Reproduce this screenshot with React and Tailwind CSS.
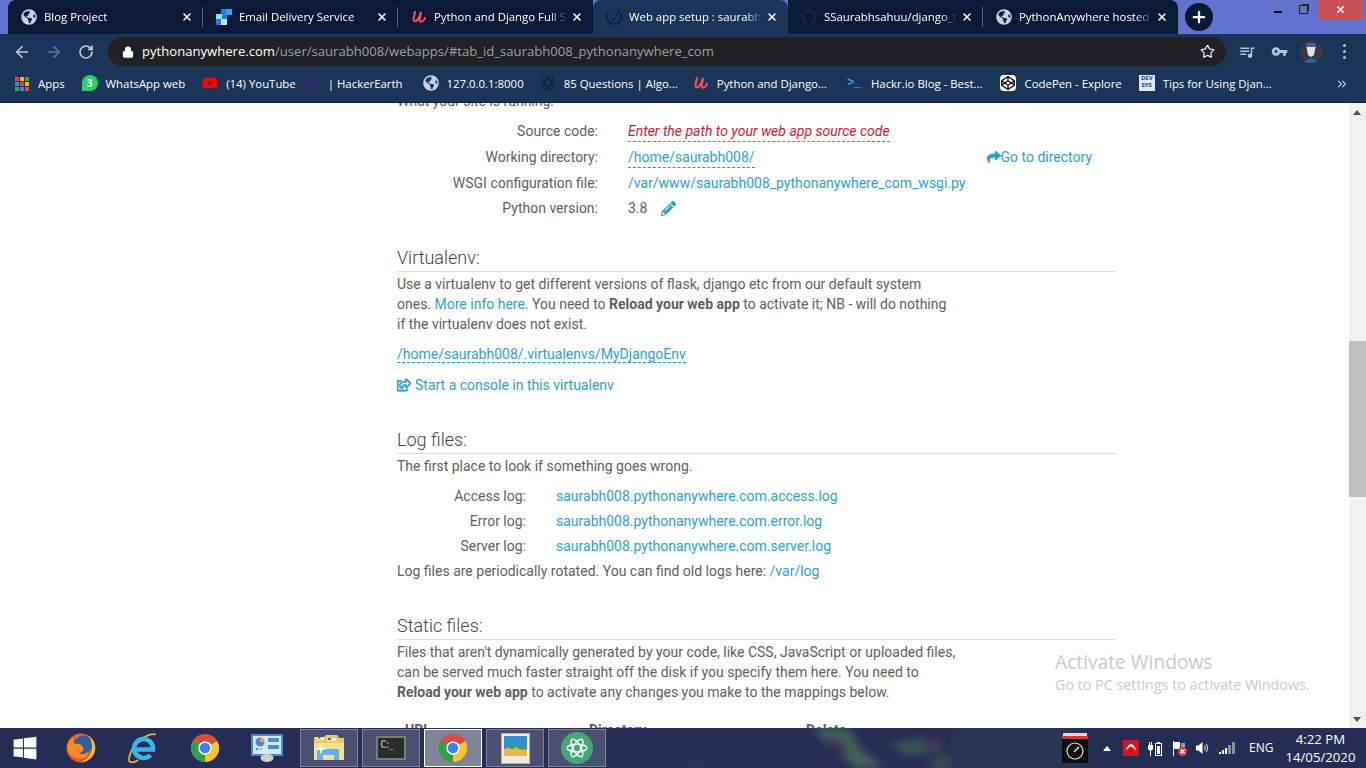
import React from 'react';
import { ArrowLeft, ArrowRight, RotateCw, Lock, Star, X, Plus, ChevronsRight } from 'lucide-react';
import { MdQueueMusic, MdVpnKey } from 'react-icons/md';
import { FaGlobeAmericas, FaGithub, FaPencilAlt, FaShare, FaRegShareSquare, FaWindows, FaYoutube, FaCodepen } from 'react-icons/fa';

const Udemy = ({ className }) => (
  <svg viewBox="0 0 16 16" className={className} fill="none" stroke="#ec5252" strokeWidth="2.2" strokeLinecap="round">
    <path d="M4 3 L2.5 10 Q2.5 13 5 12 Q8 10 10 3 L8.5 11 Q8.5 13 11 12.5 Q13 12 14 9" />
  </svg>
);

const Sendgrid = () => (
  <svg viewBox="0 0 16 16" className="w-4 h-4 shrink-0">
    <rect x="5" y="0" width="6" height="6" fill="#1a82e2" />
    <rect x="10" y="0" width="6" height="6" fill="#3aa0f0" />
    <rect x="5" y="5" width="6" height="6" fill="#1a82e2" />
    <rect x="0" y="5" width="6" height="6" fill="#99e1f4" />
    <rect x="0" y="10" width="6" height="6" fill="#1a82e2" />
    <rect x="5" y="10" width="6" height="6" fill="#bfe9f7" />
  </svg>
);

const Chrome = ({ size = 'w-[30px] h-[30px]' }) => (
  <svg viewBox="0 0 32 32" className={size}>
    <circle cx="16" cy="16" r="15" fill="#dd4b3e" />
    <path d="M16 16 L29 8.5 A15 15 0 0 1 16 31 Z" fill="#f6c42f" />
    <path d="M16 16 L16 31 A15 15 0 0 1 3 8.5 Z" fill="#2ba24c" />
    <circle cx="16" cy="16" r="7.2" fill="#fff" />
    <circle cx="16" cy="16" r="5.6" fill="#3f82ee" />
  </svg>
);

const Firefox = () => (
  <svg viewBox="0 0 30 30" className="w-[30px] h-[30px]">
    <circle cx="15" cy="15" r="14.5" fill="#e2571e" />
    <circle cx="17" cy="12" r="9.5" fill="#2f5f9e" />
    <path d="M22 2 Q30 8 29 17 Q27 27 15 29.5 Q26 24 26 14 Q26 7 22 2 Z" fill="#f7c23c" />
    <path d="M1 13 Q3 6 9 3 Q6 8 9 11 Q14 10 17 14 Q19 19 13 20 Q18 23 23 18 Q21 27 12 26 Q2 24 1 13 Z" fill="#f58a1f" />
    <path d="M8 2.5 Q12 0.5 17 1 Q12 3 11 6 Q9 5 8 2.5 Z" fill="#ee6a1f" />
  </svg>
);

const IE = () => (
  <svg viewBox="0 0 30 30" className="w-[30px] h-[30px]" fill="none">
    <path d="M28 1.5 C22 -0.5 10 6 4 17 C1 23 0 27 2 29 C4 30 7 29 10 27" stroke="#e6b428" strokeWidth="1.8" />
    <path d="M7.5 16.5 H25 A9.5 9.5 0 1 0 22.5 22" stroke="#35b6ec" strokeWidth="4.6" />
  </svg>
);

const ControlPanel = () => (
  <svg viewBox="0 0 32 28" className="w-[32px] h-[28px]">
    <rect x="0" y="0" width="32" height="22" fill="#3d8fd0" />
    <rect x="2" y="2" width="28" height="18" fill="#d5e8f7" />
    <circle cx="9" cy="8" r="4.5" fill="#3d8fd0" />
    <path d="M9 8 V3.5 A4.5 4.5 0 0 1 13.5 8 Z" fill="#f0a030" />
    <rect x="17" y="4" width="11" height="4" fill="#3d8fd0" />
    <rect x="17" y="11" width="11" height="4" fill="#3d8fd0" />
    <circle cx="6" cy="15" r="1.3" fill="#3d8fd0" />
    <circle cx="10" cy="15" r="1.3" fill="#f0a030" />
    <ellipse cx="16" cy="24" rx="6.5" ry="4" fill="#d0d0d0" />
  </svg>
);

const Explorer = () => (
  <svg viewBox="0 0 32 28" className="w-[32px] h-[28px]">
    <path d="M1 3 H11 L13 1 H24 L26 4 H31 V26 H1 Z" fill="#e9cc6a" />
    <rect x="4" y="3" width="7" height="3" fill="#f7f3df" />
    <rect x="5" y="3" width="2.5" height="2" fill="#3fa34d" />
    <rect x="14" y="4" width="9" height="3" fill="#f7f3df" />
    <rect x="15" y="4" width="3" height="2" fill="#c83b2e" />
    <rect x="1" y="9" width="30" height="17" fill="#f5e08e" />
    <path d="M4 26 V15 H26 V26 H21 V21 H10 V26 Z" fill="#63b4e0" />
    <path d="M8 9 L9 14 L14 15 L9 16 L8 21 L7 16 L2 15 L7 14 Z" fill="#ffffff" />
  </svg>
);

const Photos = () => (
  <svg viewBox="0 0 29 31" className="w-[29px] h-[31px]">
    <rect width="29" height="31" fill="#bfae8f" />
    <rect x="1" y="1" width="27" height="29" fill="#f3ebd9" />
    <rect x="3" y="3" width="23" height="20" fill="#2f8fd6" />
    <path d="M3 16 Q14 12 26 17 V23 H3 Z" fill="#e9b84c" />
    <path d="M8 16 L11 9 L14 16 Z M17 16 L20 10 L23 17 Z" fill="#4a9c5a" />
  </svg>
);

const tabs = [
  { title: 'Blog Project', icon: <FaGlobeAmericas className="w-4 h-4 text-[#c5d0e6] shrink-0" /> },
  { title: 'Email Delivery Service', icon: <Sendgrid /> },
  { title: 'Python and Django Full Stack', icon: <Udemy className="w-4 h-4 shrink-0" /> },
  {
    title: 'Web app setup : saurabh008',
    active: true,
    icon: (
      <svg viewBox="0 0 16 16" className="w-4 h-4 shrink-0" fill="none" stroke="#0b1a35" strokeWidth="1.4">
        <path d="M11 1.5 A7 7 0 0 1 8 15 A7 7 0 0 1 3 3" />
        <path d="M6 6 L6.5 7 M10 6 L10.5 7 M6 11 Q8 11 9 9" />
      </svg>
    ),
  },
  { title: 'SSaurabhsahuu/django_tutorial', icon: <FaGithub className="w-4 h-4 text-[#16263f] shrink-0" /> },
  { title: 'PythonAnywhere hosted', icon: <FaGlobeAmericas className="w-4 h-4 text-[#c5d0e6] shrink-0" /> },
];

const bookmarks = [
  { name: 'WhatsApp web', w: 'ml-[17px]', icon: <span className="w-[16px] h-[16px] rounded-full rounded-bl-none bg-[#25d366] text-white text-[10px] font-bold flex items-center justify-center">3</span> },
  { name: '(14) YouTube', w: 'ml-[17px]', icon: <FaYoutube className="w-4 h-4 text-[#f00]" /> },
  { name: '| HackerEarth', w: 'ml-[8px]', icon: <span className="w-4 h-4 bg-[#21305c]" /> },
  { name: '127.0.0.1:8000', w: 'ml-[20px]', icon: <FaGlobeAmericas className="w-4 h-4 text-[#c5d0e6]" /> },
  {
    name: '85 Questions | Algo...',
    w: 'ml-[16px]',
    icon: (
      <svg viewBox="0 0 16 16" className="w-4 h-4" fill="none" stroke="#10223f" strokeWidth="1">
        <ellipse cx="8" cy="8" rx="7.5" ry="3" />
        <ellipse cx="8" cy="8" rx="7.5" ry="3" transform="rotate(60 8 8)" />
        <ellipse cx="8" cy="8" rx="7.5" ry="3" transform="rotate(120 8 8)" />
      </svg>
    ),
  },
  { name: 'Python and Django...', w: 'ml-[15px]', icon: <Udemy className="w-4 h-4" /> },
  { name: 'Hackr.io Blog - Best...', w: 'ml-[20px]', icon: <span className="w-4 h-4 text-[#3f9be0] text-[12px] font-bold leading-4 font-['Liberation_Mono',monospace]">{'>_'}</span> },
  { name: 'CodePen - Explore', w: 'ml-[18px]', icon: <span className="w-4 h-4 bg-white rounded-sm flex items-center justify-center"><FaCodepen className="w-[14px] h-[14px] text-black" /></span> },
  {
    name: 'Tips for Using Djan...',
    w: 'ml-[17px]',
    icon: <span className="w-4 h-4 bg-[#dfe6f2] text-[#24406e] text-[6px] font-bold leading-[7px] text-center overflow-hidden">DEV<br />SYS</span>,
  },
];

const Tab = ({ tab, last, first, sep }) => (
  <div className={`w-[195px] h-full flex items-center pl-[13px] relative ${tab.active ? 'bg-[#1a3558] rounded-t-lg' : 'bg-[#0a1a36]'} ${first ? 'rounded-tl-lg' : ''} ${last ? 'rounded-tr-lg' : ''}`}>
    {tab.icon}
    <span className="ml-[7px] w-[133px] overflow-hidden whitespace-nowrap text-[11.4px] text-white [mask-image:linear-gradient(to_right,black_88%,transparent)]">
      {tab.title}
    </span>
    <X className="w-[12px] h-[12px] text-white ml-[4px] shrink-0" strokeWidth={3} />
    {sep && <span className="absolute right-0 top-[7px] bottom-[7px] w-px bg-[#55647e]" />}
  </div>
);

const Link = ({ children, className = '' }) => <a className={`text-[#2a9fd6] ${className}`}>{children}</a>;

const Dashed = ({ children, className = '' }) => (
  <span className={`border-b border-dashed border-[#1a9ad6] ${className}`}>{children}</span>
);

const Heading = ({ children, className = '' }) => (
  <h3 className={`h-[27px] border-b border-[#dddddd] text-[18px] font-light leading-[26px] text-[#444] ${className}`}>{children}</h3>
);

const CodeRow = ({ label, children, h = 'h-[26px]' }) => (
  <div className={`flex items-center ${h}`}>
    <span className="w-[201px] text-right">{label}</span>
    <div className="ml-[30px] flex-1 flex items-center">{children}</div>
  </div>
);

const LogRow = ({ label, file }) => (
  <div className="flex items-center h-[25px]">
    <span className="w-[129px] text-right">{label}</span>
    <Link className="ml-[30px]">{file}</Link>
  </div>
);

const TaskButton = ({ children, active }) => (
  <div className={`w-[58px] border flex items-center justify-center ${active ? 'border-white bg-[#7f8597]' : 'border-[#7d8299] bg-[#4b5070]'}`}>
    {children}
  </div>
);

export default function App() {
  return (
    <div className="h-screen w-full overflow-hidden flex flex-col font-['Open_Sans',sans-serif]">
      {/* Tab strip */}
      <div className="h-[34px] bg-[#6472cf] flex shrink-0">
        <div className="ml-[8px] flex h-full">
          {tabs.map((t, i) => (
            <Tab key={t.title} tab={t} first={i === 0} last={i === tabs.length - 1} sep={i === 0 || i === 1 || i === 4} />
          ))}
        </div>
        <div className="ml-[7px] mt-[3px] w-[28px] h-[28px] rounded-full bg-[#0a1a36] flex items-center justify-center">
          <Plus className="w-[18px] h-[18px] text-white" strokeWidth={3} />
        </div>
        <div className="ml-auto mr-[3px] flex h-[19px] items-start">
          <div className="w-[25px] flex pt-[11px]"><span className="w-[8px] h-[2px] bg-[#111]" /></div>
          <div className="w-[19px] flex pt-[4px]">
            <span className="w-[9px] h-[9px] mt-[1px] border border-[#222] shadow-[2px_-2px_0_-1px_#222]" />
          </div>
          <div className="w-[45px] h-[19px] bg-[#c75050] flex items-center justify-center">
            <X className="w-[11px] h-[11px] text-white" strokeWidth={3.5} />
          </div>
        </div>
      </div>

      {/* Address bar */}
      <div className="h-[35px] bg-[#1a3558] flex items-center shrink-0">
        <ArrowLeft className="w-[18px] h-[18px] text-[#c3cede] ml-[13px]" strokeWidth={2.2} />
        <ArrowRight className="w-[18px] h-[18px] text-[#5f7795] ml-[14px]" strokeWidth={2.2} />
        <RotateCw className="w-[16px] h-[16px] text-[#c3cede] ml-[15px]" strokeWidth={2.4} />
        <div className="ml-[14px] w-[1118px] h-[29px] rounded-full bg-[#202124] flex items-center pl-[14px] pr-[11px]">
          <Lock className="w-[12px] h-[14px] text-white fill-white" strokeWidth={2.5} />
          <span className="ml-[8px] text-[13.1px] text-white">pythonanywhere.com</span>
          <span className="text-[13.1px] text-[#9aa0a6]">/user/saurabh008/webapps/#tab_id_saurabh008_pythonanywhere_com</span>
          <Star className="w-[15px] h-[15px] text-[#e8eaed] ml-auto" strokeWidth={2} />
        </div>
        <MdQueueMusic className="w-[18px] h-[18px] text-[#b4c2d8] ml-[12px]" />
        <MdVpnKey className="w-[17px] h-[17px] text-[#b4c2d8] ml-[15px]" />
        <svg viewBox="0 0 22 22" className="w-[22px] h-[22px] ml-[12px]">
          <circle cx="11" cy="11" r="11" fill="#3b3a44" />
          <path d="M6 6 L16 6 L15 2 L7 2 Z" fill="#6b4bb0" />
          <path d="M6.5 6 H15.5 L14 14 L11 16 L8 14 Z" fill="#e6e6e6" />
          <path d="M4 21 Q11 14 18 21 Q11 23 4 21 Z" fill="#2a5fa8" />
        </svg>
        <div className="ml-[21px] flex flex-col gap-[3px]">
          <span className="w-[3px] h-[3px] rounded-full bg-[#b4c2d8]" />
          <span className="w-[3px] h-[3px] rounded-full bg-[#b4c2d8]" />
          <span className="w-[3px] h-[3px] rounded-full bg-[#b4c2d8]" />
        </div>
      </div>

      {/* Bookmarks */}
      <div className="h-[34px] bg-[#1a3558] border-b border-[#0e2038] pb-[4px] flex items-center text-[11.4px] text-white shrink-0 whitespace-nowrap">
        <div className="ml-[15px] grid grid-cols-3 gap-[1px] w-[14px] h-[14px]">
          {['#ea4335', '#fbbc05', '#34a853', '#4285f4', '#ea4335', '#fbbc05', '#34a853', '#4285f4', '#ea4335'].map((c, i) => (
            <span key={i} style={{ backgroundColor: c }} />
          ))}
        </div>
        <span className="ml-[9px]">Apps</span>
        {bookmarks.map((b) => (
          <div key={b.name} className={`flex items-center ${b.w}`}>
            {b.icon}
            <span className="ml-[8px]">{b.name}</span>
          </div>
        ))}
        <ChevronsRight className="w-[14px] h-[14px] text-[#c3cede] ml-auto mr-[17px]" />
      </div>

      {/* Page */}
      <div className="flex-1 min-h-0 flex relative bg-white">
        <div className="flex-1 overflow-hidden">
          <div className="ml-[397px] w-[719px] -mt-[12px] font-['Roboto',sans-serif] text-[14px] leading-[20px] text-[#606060]">
            <p className="h-[20px]">What your site is running:</p>
            <div className="mt-[7px]">
              <CodeRow label="Source code:">
                <Dashed className="italic text-[#e0103a] mt-[1px]">Enter the path to your web app source code</Dashed>
              </CodeRow>
              <CodeRow label="Working directory:">
                <Dashed className="text-[#2a9fd6]">/home/saurabh008/</Dashed>
                <Link className="ml-[232px] flex items-center">
                  <FaShare className="w-[14px] h-[14px]" />
                  Go to directory
                </Link>
              </CodeRow>
              <CodeRow label="WSGI configuration file:">
                <Link>/var/www/saurabh008_pythonanywhere_com_wsgi.py</Link>
              </CodeRow>
              <CodeRow label="Python version:" h="h-[24px]">
                <span>3.8</span>
                <FaPencilAlt className="w-[15px] h-[15px] text-[#2a9fd6] ml-[14px]" />
              </CodeRow>
            </div>

            <Heading className="mt-[25px]">Virtualenv:</Heading>
            <p className="mt-[2px] w-[560px]">
              Use a virtualenv to get different versions of flask, django etc from our default system ones. <Link>More info here</Link>. You need to <b>Reload your web app</b> to activate it; NB - will do nothing if the virtualenv does not exist.
            </p>
            <p className="mt-[10px]"><Dashed className="text-[#2a9fd6]">/home/saurabh008/.virtualenvs/MyDjangoEnv</Dashed></p>
            <p className="mt-[11px] flex items-center">
              <Link className="flex items-center">
                <FaRegShareSquare className="w-[14px] h-[14px] mr-[4px]" stroke="currentColor" strokeWidth={30} />
                Start a console in this virtualenv
              </Link>
            </p>

            <Heading className="mt-[32px]">Log files:</Heading>
            <p className="mt-[2px]">The first place to look if something goes wrong.</p>
            <div className="mt-[7px]">
              <LogRow label="Access log:" file="saurabh008.pythonanywhere.com.access.log" />
              <LogRow label="Error log:" file="saurabh008.pythonanywhere.com.error.log" />
              <LogRow label="Server log:" file="saurabh008.pythonanywhere.com.server.log" />
            </div>
            <p className="mt-[3px]">Log files are periodically rotated. You can find old logs here: <Link>/var/log</Link></p>

            <Heading className="mt-[32px]">Static files:</Heading>
            <p className="mt-[2px] w-[560px]">
              Files that aren't dynamically generated by your code, like CSS, JavaScript or uploaded files, can be served much faster straight off the disk if you specify them here. You need to <b>Reload your web app</b> to activate any changes you make to the mappings below.
            </p>
            <div className="mt-[18px] flex font-bold">
              <span className="ml-[8px] w-[184px]">URL</span>
              <span className="w-[217px]">Directory</span>
              <span>Delete</span>
            </div>
          </div>
        </div>

        {/* Scrollbar */}
        <div className="w-[17px] bg-[#f1f1f1] relative shrink-0">
          <div className="absolute top-[7px] left-[4px] w-0 h-0 border-x-[4px] border-x-transparent border-b-[5px] border-b-[#505050]" />
          <div className="absolute top-[238px] left-0 w-full h-[156px] bg-[#c1c1c1]" />
          <div className="absolute bottom-[6px] left-[4px] w-0 h-0 border-x-[4px] border-x-transparent border-t-[5px] border-t-[#505050]" />
        </div>

        {/* Activation watermark */}
        <div className="absolute left-[1055px] top-[547px] text-[#c9c9c9] font-['Open_Sans',sans-serif]">
          <p className="text-[19.2px] leading-[24px]">Activate Windows</p>
          <p className="text-[14.3px] leading-[22px]">Go to PC settings to activate Windows.</p>
        </div>
      </div>

      {/* Taskbar */}
      <div className="h-[40px] shrink-0 flex items-center text-white relative overflow-hidden bg-[#262d54]">
        {/* blurred wallpaper plant behind the bar */}
        <svg viewBox="0 0 400 40" className="absolute left-[683px] top-0 w-[400px] h-[40px] blur-[4px] opacity-70">
          <rect x="270" y="0" width="130" height="40" fill="#2c4358" opacity="0.7" />
          <path d="M128 0 L165 0 L190 40 L172 40 Z" fill="#4e7a58" />
          <path d="M205 16 L250 8 L262 22 L225 28 Z" fill="#3f6a52" />
          <path d="M170 40 L185 26 L200 40 Z" fill="#547e66" />
          <path d="M240 40 L262 26 L270 40 Z" fill="#3f6a52" />
          <path d="M145 10 L160 14 L165 28 L150 24 Z" fill="#4a2f58" />
          <path d="M240 10 L262 6 L258 16 L244 20 Z" fill="#4a2f58" />
          <path d="M0 40 L15 36 L25 40 Z" fill="#3f6a52" />
        </svg>

        <div className="relative flex items-center w-full">
          <FaWindows className="w-[26px] h-[26px] ml-[12px]" />
          <div className="ml-[28px]"><Firefox /></div>
          <div className="ml-[32px]"><IE /></div>
          <div className="ml-[32px]"><Chrome /></div>
          <div className="ml-[31px]"><ControlPanel /></div>
          <div className="ml-[17px] flex gap-[4px] h-[38px]">
            <TaskButton><Explorer /></TaskButton>
            <TaskButton>
              <span className="w-[30px] h-[24px] bg-[#2b2b2b] border-2 border-[#7a7a7a] text-[10px] leading-3 pl-[2px] font-bold text-[#999]">C:_</span>
            </TaskButton>
            <TaskButton active><Chrome /></TaskButton>
            <TaskButton><Photos /></TaskButton>
            <TaskButton>
              <span className="w-[32px] h-[32px] rounded-full bg-[#40a977] flex items-center justify-center">
                <svg viewBox="0 0 20 20" className="w-[22px] h-[22px]" fill="none" stroke="#fff" strokeWidth="1.3">
                  <ellipse cx="10" cy="10" rx="9" ry="3.5" />
                  <ellipse cx="10" cy="10" rx="9" ry="3.5" transform="rotate(60 10 10)" />
                  <ellipse cx="10" cy="10" rx="9" ry="3.5" transform="rotate(120 10 10)" />
                </svg>
              </span>
            </TaskButton>
          </div>

          {/* Tray */}
          <div className="ml-[456px] flex items-center">
            <svg viewBox="0 0 26 30" className="w-[26px] h-[30px]">
              <rect x="1" y="0" width="24" height="4" fill="#d8d8d8" />
              <rect x="0" y="3" width="26" height="3" fill="#d23a3a" />
              <rect x="0" y="6" width="26" height="24" fill="#0d0d0d" />
              <circle cx="13" cy="18" r="8" fill="none" stroke="#e8e8e8" strokeWidth="1.2" />
              <path d="M12 19 L17 14" stroke="#e8e8e8" strokeWidth="1.4" />
            </svg>
            <span className="ml-[15px] w-0 h-0 border-x-[4px] border-x-transparent border-b-[5px] border-b-white" />
            <svg viewBox="0 0 16 16" className="ml-[12px] w-[16px] h-[16px]">
              <rect width="16" height="16" fill="#d9121f" />
              <path d="M2.5 11 Q6 2.5 9 4 Q12 6 13.5 11.5 Q10.5 7 8 6.5 Q5.5 7 2.5 11 Z" fill="#fff" />
            </svg>
            <svg viewBox="0 0 15 15" className="ml-[9px] w-[15px] h-[15px]" fill="#fff">
              <path d="M1 1 V4 H0 V8 Q0 9 2 9.5 V15 H3 V9.5 Q5 9 5 8 V4 H4 V1 H3 V4 H2 V1 Z" />
              <path fillRule="evenodd" d="M7 2 H9 V1 H12 V2 H14 V15 H7 Z M8 3 V14 H13 V3 Z" />
              <rect x="9" y="5" width="3" height="8" />
            </svg>
            <svg viewBox="0 0 15 15" className="ml-[9px] w-[15px] h-[15px]">
              <path d="M1 0 V15 H2 V8 H8 V1 H2 V0 Z" fill="#fff" />
              <path d="M9 2 H13 V6 H9 Z" fill="#9aa0b5" />
              <circle cx="10.5" cy="10.5" r="4.5" fill="#e23b3b" />
              <path d="M8.5 8.5 L12.5 12.5 M12.5 8.5 L8.5 12.5" stroke="#fff" strokeWidth="1.4" />
            </svg>
            <svg viewBox="0 0 13 14" className="ml-[9px] w-[13px] h-[14px]" fill="none">
              <path d="M0 4.5 H2.5 L6.5 1 V13 L2.5 9.5 H0 Z" fill="#fff" />
              <path d="M8.5 4.5 Q10 7 8.5 9.5 M10.5 3 Q13 7 10.5 11" stroke="#dfe3ee" strokeWidth="1" />
            </svg>
            <div className="ml-[10px] flex items-end gap-[1px] h-[12px] w-[16px]">
              <span className="w-[2px] h-[2px] bg-white" />
              <span className="w-[2px] h-[4px] bg-white" />
              <span className="w-[2px] h-[6px] bg-white" />
              <span className="w-[3px] h-[9px] bg-[#8a8d9c]" />
              <span className="w-[3px] h-[12px] bg-[#8a8d9c]" />
            </div>
            <span className="ml-[14px] text-[12px]">ENG</span>
            <div className="ml-[12px] w-[70px] text-center text-[13.2px] leading-[18px] whitespace-nowrap">
              <p>4:22 PM</p>
              <p>14/05/2020</p>
            </div>
          </div>
        </div>
      </div>
    </div>
  );
}
